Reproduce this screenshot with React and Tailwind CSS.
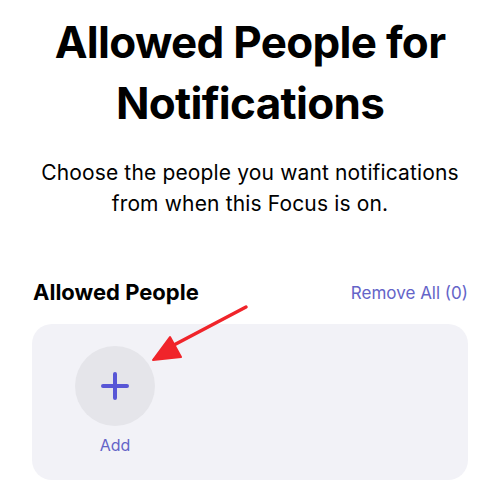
import React from "react";

export default function App() {
  return (
    <div className="relative w-[500px] h-[499px] bg-white overflow-hidden font-['Inter','Noto_Sans',sans-serif] text-black">
      <div className="px-8 pt-3">
        <h1 className="text-center font-bold text-[44px] leading-[61px] tracking-[-0.7px]">
          Allowed People for
          <br />
          Notifications
        </h1>
        <p className="mt-[23px] text-center text-[21px] leading-[31px] tracking-[0.15px]">
          Choose the people you want notifications
          <br />
          from when this Focus is on.
        </p>

        <div className="mt-[57px] flex items-center justify-between">
          <h2 className="font-bold text-[22px] leading-[28px] pl-px">Allowed People</h2>
          <button className="text-[17px] leading-[28px] text-[#6464c8] pt-[3px]">Remove All (0)</button>
        </div>

        <div className="mt-[17px] h-[156px] rounded-[20px] bg-[#f2f2f7] pt-[22px] pl-[43px]">
          <div className="flex w-20 flex-col items-center">
            <div className="flex h-20 w-20 items-center justify-center rounded-full bg-[#e5e5ea]">
              <svg width="28" height="28" viewBox="0 0 28 28" fill="none">
                <path d="M14 2v24M2 14h24" stroke="#5856d6" strokeWidth="4" strokeLinecap="round" />
              </svg>
            </div>
            <span className="mt-[9px] text-[16px] leading-[20px] text-[#6464c8]">Add</span>
          </div>
        </div>
      </div>

      {/* red pointer over the add button */}
      <svg className="absolute left-0 top-0 pointer-events-none" width="500" height="499" viewBox="0 0 500 499">
        <path d="M246 307 L172 346" stroke="#f0242a" strokeWidth="3.5" strokeLinecap="round" />
        <path d="M153 360 L170 337 L181 357 Z" fill="#f0242a" stroke="#f0242a" strokeWidth="2" strokeLinejoin="round" />
      </svg>
    </div>
  );
}
